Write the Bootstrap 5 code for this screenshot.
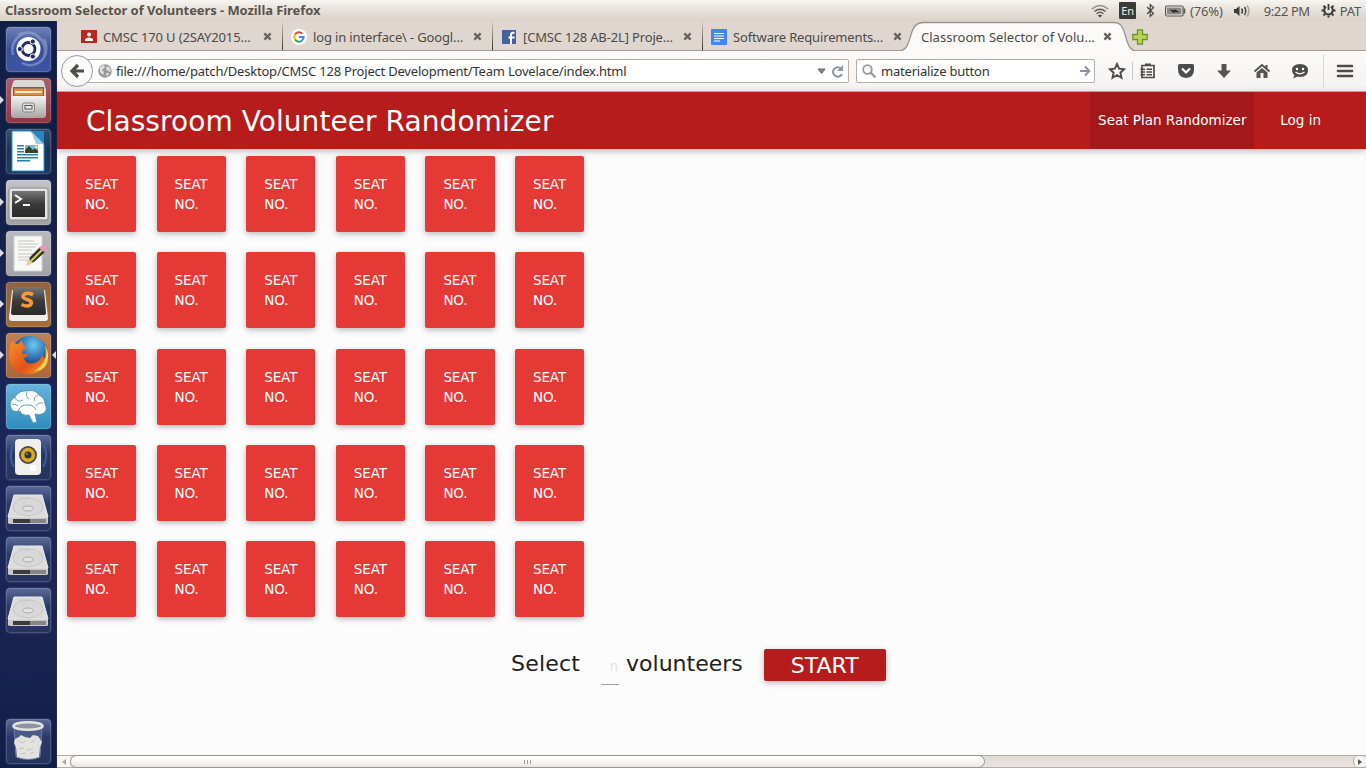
<!DOCTYPE html>
<html lang="en">
<head>
<meta charset="utf-8">
<title>Classroom Selector of Volunteers</title>
<link href="https://cdn.jsdelivr.net/npm/bootstrap@5.3.0/dist/css/bootstrap.min.css" rel="stylesheet">
<script src="https://cdn.jsdelivr.net/npm/bootstrap@5.3.0/dist/js/bootstrap.bundle.min.js"></script>
<style>
body{width:1366px;height:768px;overflow:hidden;font:13px/16px "Noto Sans",sans-serif;color:#3c3b37}
svg{display:block;flex:none}
.panel{height:21px;background:linear-gradient(#f7f5f2,#ece8e2 30%,#dbd2ca 100%);color:#5a534c}
.panel-title{font-weight:700;padding:0 0 2px 5px;letter-spacing:-.08px}
.indicators{width:275px;letter-spacing:-.15px}
.ind-en{width:17px;height:17px;margin:0 10px 0 10px;background:#3c3b37;color:#f0ede8;font-size:11px;border-radius:1px}
.clock{width:47px;margin:0 10px 0 13px;letter-spacing:-.4px}
.launcher{width:57px;flex:none;background:radial-gradient(circle at 30% 60%,#1c2659,transparent 60%),linear-gradient(#101f45,#16224d 45%,#1b2453 75%,#101f47);padding:6px 0 4px 6px;gap:6px;border-right:1px solid #24264c}
.tile{width:45px;height:45px;border-radius:4px;position:relative;box-shadow:0 0 0 1px #ffffff14}
.tile::before{content:"";position:absolute;inset:0;border:1px solid #ffffff28;border-radius:4px}
.tile>svg{width:45px;height:45px}
.glass{background:linear-gradient(#5a6a96,#2b3a6b 40%,#26335f)}
.mark-l,.mark-r{position:absolute;top:18px;border:4px solid transparent}
.mark-l{left:-6px;border-left-color:#dcdce4;border-right:0}
.mark-r{right:-5px;border-right-color:#dcdce4;border-left:0}
.tabstrip{height:30px;flex:none;background:#dfd6cf;border-bottom:1px solid #a39a92;padding-left:16px;letter-spacing:-.15px}
.tab{width:210px;padding:2px 11px 0 8px;position:relative;height:29px;color:#4c4a47}
.tab.sep{border-right:1px solid;border-image:linear-gradient(#dfd6cf,#2d2a26) 1;padding-right:10px}
.tab .fav{width:22px}
.tab-shape{position:absolute;left:-15px;top:0}
.tab.active{letter-spacing:.02px}
.toolbar{height:41px;flex:none;background:linear-gradient(#fbfaf9,#f4f3f1);border-bottom:1px solid #bdb4ac;letter-spacing:-.21px;color:#333}
.field{height:24px;background:#fff;border:1px solid #b9aca2;border-radius:2px}
.urlfield{width:772px;margin-left:-16px;padding:0 4px 0 20px}
.searchfield{width:239px;margin-left:7px;padding:0 3px 0 5px}
.back{width:32px;height:32px;border-radius:50%;background:#fbfaf9;border:1px solid #8f9daa;margin-left:4px;z-index:1;flex:none}
.tools svg{width:18px;height:18px;margin-right:20px}
.page{background:#fcfcfc;font-family:"DejaVu Sans",sans-serif}
.mainbar{height:57px;background:#b71c1c;color:#fff;box-shadow:0 2px 5px #00000029,0 2px 10px #0000001f;font-size:13.5px;line-height:56px;position:relative}
.mainbar .title{font-size:28px;line-height:60px;padding-left:29px;letter-spacing:.07px}
.mainbar .on{background:#a31919;width:164px}
.mainbar .login{padding:0 45px 0 26px}
.seats{display:grid;grid-template-columns:repeat(6,69.3px);gap:20.3px;padding:7px 0 0 10px}
.seat{height:76px;background:#e53935;color:#fff;border-radius:2px;padding:18px 0 0 18px;font-size:13.5px;line-height:20px;letter-spacing:-.1px;box-shadow:0 2px 5px #00000029,0 2px 8px #0000001f}
.pick{font-size:22px;line-height:30px;color:#212121;margin-top:32px;padding-left:454px}
.count{width:18px;border-bottom:1px solid #9e9e9e;color:#e2e2e2;font-size:13.5px;line-height:35px;height:36px;margin:0 7px 0 21px;padding-right:1px}
.start{width:122px;height:32px;line-height:34px;background:#b71c1c;color:#fff;border-radius:2px;box-shadow:0 2px 5px #00000029,0 2px 8px #0000001f;margin-left:21px}
.hscroll{height:13px;flex:none;background:linear-gradient(#dfdad5,#e9e5e0);border-top:1px solid #b4aba0;border-bottom:1px solid #b4aba0}
.thumb{width:915px;height:13px;border:1px solid #9c9488;border-radius:7px;background:linear-gradient(#fff,#f8f7f5 50%,#e9e5e0)}
.arrowcap{width:13px;height:11px;background:#f8f6f4}
.arrowcap.rightcap{border-left:1px solid #b4aba0;border-radius:6px}
</style>
</head>
<body class="d-flex flex-column">
<svg width="0" height="0" class="position-absolute"><defs>
<linearGradient id="silver" x2="0" y2="1"><stop stop-color="#f4f4f2"/><stop offset="1" stop-color="#a5a5a3"/></linearGradient>
<linearGradient id="blackg" x2="0" y2="1"><stop stop-color="#777"/><stop offset=".5" stop-color="#3a3a3a"/><stop offset="1" stop-color="#2a2a2a"/></linearGradient>
<radialGradient id="globe" cx=".6" cy=".25"><stop stop-color="#6fc8f0"/><stop offset="1" stop-color="#17529c"/></radialGradient>
<linearGradient id="fox" x2="1" y2="1"><stop stop-color="#f7912b"/><stop offset=".6" stop-color="#e5511c"/><stop offset="1" stop-color="#f6a623"/></linearGradient>
<symbol id="x" viewBox="0 0 10 10"><path d="M1.500 1.500l7 7m0-7l-7 7" stroke="#67645f" stroke-width="2.600"/></symbol>
<symbol id="disk" viewBox="0 0 45 45"><path d="M8 9h28l6 21v7q0 1-2 1H5q-3 0-3-1v-7z" fill="#c9c9c9"/><path d="M8 9h28l6 22H2z" fill="#dcdcdc" stroke="#e8e8e8"/><ellipse cx="22" cy="21" rx="15" ry="9" fill="#d8d8d8" stroke="#c6c6c6"/><ellipse cx="22" cy="22.500" rx="5" ry="2.500" fill="#e2e2e2" stroke="#aaa"/><path d="M13 12h10l-6 5" fill="none" stroke="#c8c8c8"/><path d="M7 33h33v4H7z" fill="#3c3c3c"/><path d="M24 33h16v4H24z" fill="#858585"/></symbol>
</defs></svg>

<header class="panel d-flex flex-shrink-0 align-items-center justify-content-between">
  <div class="panel-title text-nowrap">Classroom Selector of Volunteers - Mozilla Firefox</div>
  <div class="indicators d-flex align-items-center">
    <svg width="18" height="14" viewBox="0 0 18 14" fill="none" stroke-width="1.400"><path d="M1 5q8-7 16 0" stroke="#8f8a84"/><path d="M3.500 7.500q5.500-4.500 11 0M5.500 9.800q3.500-3 7 0" stroke="#5a5650"/><path d="M7 11.500q2-1.500 4 0l-2 2z" fill="#3c3b37"/></svg>
    <div class="ind-en d-flex align-items-center justify-content-center">En</div>
    <svg width="9" height="15" viewBox="0 0 9 15"><path d="M1 4l6.500 6.500-3.300 3V1.500l3.300 3L1 11" fill="none" stroke="#4a4743" stroke-width="1.200"/></svg>
    <svg style="margin:0 4px 0 10px" width="21" height="12" viewBox="0 0 21 12"><rect x=".6" y="1" width="17.500" height="10" rx="1.500" fill="#f4f2ef" stroke="#55524d" stroke-width="1.200"/><path d="M2 2.500h14.500v7H2z" fill="#8b8883"/><path d="M19.500 3.500v5" stroke="#55524d" stroke-width="1.500"/><path d="M4.500 4.500l5 1V4l5 3.500-5-.7v1.700z" fill="#222"/></svg>
    <span>(76%)</span>
    <svg style="margin-left:10px" width="18" height="14" viewBox="0 0 18 14" fill="none" stroke="#4a4743" stroke-width="1.500"><path d="M1 5h2L6.500 2v10L3 9H1z" fill="#3c3b37" stroke="none"/><path d="M8.500 4.500q2 2.500 0 5M11.500 3q2.500 4 0 8"/><path d="M14 1.500q4 5.500 0 11" stroke="#aaa59e"/></svg>
    <span class="clock text-nowrap">9:22 PM</span>
    <svg style="margin-right:4px" width="15" height="15" viewBox="0 0 15 15" fill="none" stroke="#3c3b37"><path d="M5 3.700a4.300 4.300 0 1 0 5 0" stroke-width="2"/><path d="M7.500 1v6" stroke-width="1.800"/><path d="M2.500 2.800l1.500 1.500M12.500 2.800L11 4.300M.5 7.500H3m9 0h2.500M2.500 12.500L4 11m8.500 1.500L11 11m-3.500 1.500v2" stroke-width="2"/></svg>
    <span>PAT</span>
  </div>
</header>

<div class="d-flex flex-grow-1">
<nav class="launcher d-flex flex-column">
  <div class="tile" style="background:linear-gradient(#6d80b8,#3a4f96 50%,#3c55a5)"><svg viewBox="0 0 45 45" fill="none"><path d="M7 28C2 10 24-2 34 12M38 12c8 16-6 32-22 24M12 8c12-8 32 4 26 22" stroke="#a4b4dc" stroke-width="2.500" opacity=".5"/><circle cx="22.500" cy="22" r="12" fill="#fff"/><circle cx="22.500" cy="22" r="6.500" stroke="#1f2d63" stroke-width="2.800"/><g fill="#1f2d63" stroke="#fff"><circle cx="13.800" cy="22" r="2.600"/><circle cx="26.800" cy="14.500" r="2.600"/><circle cx="26.800" cy="29.500" r="2.600"/></g></svg></div>
  <div class="tile" style="background:linear-gradient(#a8606c,#8f3543)"><i class="mark-l"></i><svg viewBox="0 0 45 45"><path d="M7 4q1-2 3-2h25q2 0 3 2l2 8v20H5V12z" fill="#d8d8d5"/><path d="M7 9h31v9H7z" fill="#6b625c"/><path d="M8 10.500h29v7H8z" fill="#e08b3f"/><path d="M9 13h27v2H9z" fill="#fbe9d0"/><path d="M5 18h35v19q0 3-3 3H8q-3 0-3-3z" fill="url(#silver)"/><rect x="16.500" y="25" width="12" height="9" rx="2" fill="#ddd" stroke="#858585"/><rect x="19" y="27.500" width="7" height="3.500" fill="#eee" stroke="#555"/></svg></div>
  <div class="tile" style="background:linear-gradient(#33506f,#1b3357 50%,#1d3a61)"><svg viewBox="0 0 45 45"><path d="M6 2h19l13 13v27H6z" fill="#fff" stroke="#2b91cc"/><path d="M24 2h14v14z" fill="#2388c0"/><path d="M25 2v0l13 13h-8z" fill="#9bcbe4"/><g fill="#2a80ad"><path d="M11 16h7v1.500h-7zM11 19h7v1.500h-7zM11 22h7v1.500h-7zM11 25h21v1.500H11zM11 28h21v1.500H11zM11 31h13v1.500H11z"/></g><path d="M19 16h13v8H19z" fill="#79b7dd"/><path d="M19 24v-3l4-4 4 4 2-2 3 3v2z" fill="#34452b"/><circle cx="30" cy="18" r="1.500" fill="#ffe04b"/></svg></div>
  <div class="tile" style="background:linear-gradient(#c4c4c8,#a0a0a5)"><i class="mark-l"></i><svg viewBox="0 0 45 45"><rect x="3" y="8" width="39" height="32" rx="2" fill="#e3e3df" stroke="#88888a"/><rect x="6" y="11" width="33" height="26" fill="url(#blackg)"/><path d="M9 15l6 4-6 4" fill="none" stroke="#fff" stroke-width="2"/><path d="M17 25h7" stroke="#fff" stroke-width="2"/></svg></div>
  <div class="tile" style="background:linear-gradient(#b9b9bd,#a2a2a7)"><i class="mark-l"></i><svg viewBox="0 0 45 45"><path d="M8 5h28v35H8z" fill="#f7f7f5" stroke="#d2d2d2"/><path d="M12 10h16M12 13h20M12 16h18M12 19h14M12 23h16M12 26h12M12 29h10" stroke="#c4c4c4"/><path d="M21 34l3-8 10-10 5 5-11 10z" fill="#33332f"/><path d="M25 30l11-11" stroke="#d6d24a" stroke-width="2"/><path d="M20 35l3-7 4 4z" fill="#e8cd9a"/><path d="M33 17l3-3q4-1 5 4l-3 3z" fill="#e59abb"/></svg></div>
  <div class="tile" style="background:linear-gradient(#8d6443,#a56d34)"><i class="mark-l"></i><svg viewBox="0 0 45 45"><path d="M3 36L6 8h33l3 28q0 3-3 3H6q-3 0-3-3z" fill="#f0eeea"/><path d="M5 31L7 8q0-3 3-3h25q3 0 3 3l2 23q0 2-3 2H8q-3 0-3-2z" fill="url(#blackg)"/><path d="M27 12.500q-8-3-10 1.500c-1 4 9 3 8.500 7q-2 5-10 1.500" fill="none" stroke="#f59a37" stroke-width="3.500"/></svg></div>
  <div class="tile" style="background:linear-gradient(#c08058,#a8683c)"><i class="mark-l"></i><i class="mark-r"></i><svg viewBox="0 0 45 45"><circle cx="24" cy="21" r="18" fill="url(#globe)"/><path d="M6 8q2 3 6 3l4-4q0 5 5 8-5 1-5 6 4-1 7 2-4 0-5 3 3 6 10 4 7-2 8-9l2 5q3-7 0-14 5 8 3 16-4 13-18 13Q8 41 4 29 1 17 6 8z" fill="url(#fox)"/><path d="M38 12q3 4 2 12l-3 6q-5 7-10 8 14 0 15-13 1-8-4-13z" fill="#fcd34a"/></svg></div>
  <div class="tile" style="background:linear-gradient(#66b4da,#2e8cbd)"><svg viewBox="0 0 45 45" fill="#fff" stroke="#3b8eb5" stroke-width=".8"><path d="M5 24q-3-7 4-11 4-7 12-6 8-2 12 4 6 3 6 9 3 5-1 9-4 3-9 1l2 8-4 1-4-8q-8 1-9-4-7 2-9-3z"/><path d="M9 14q3 5 8 2m4-8q-2 5 2 7m9-4q-5 2-3 6m8 2q-5-1-7 3m-18 5q3-7 10-6 6 0 8 5m-18-4q-2-2-6-2" fill="none"/></svg></div>
  <div class="tile glass"><svg viewBox="0 0 45 45"><path d="M7 10q-5 12 1 22M38 10q5 12-1 22" fill="none" stroke="#3a5f98" stroke-width="2"/><path d="M13 4h18q4 0 4 4v28q0 4-4 4H13q-4 0-4-4V8q0-4 4-4z" fill="#efefec"/><circle cx="22" cy="20" r="9" fill="#484848"/><circle cx="22" cy="20" r="7.200" fill="#d9ab1e"/><circle cx="22" cy="20" r="3.500" fill="#333"/><circle cx="21" cy="19" r="1.200" fill="#777"/><circle cx="27" cy="33" r="3" fill="#fff"/></svg></div>
  <div class="tile glass"><svg><use href="#disk"/></svg></div>
  <div class="tile glass"><svg><use href="#disk"/></svg></div>
  <div class="tile glass"><svg><use href="#disk"/></svg></div>
  <div class="tile glass mt-auto"><svg viewBox="0 0 45 45"><path d="M8 9h28l-2 29q-12 5-24 0z" fill="#4b5b86" stroke="#6f7ca2"/><ellipse cx="22" cy="7" rx="14.500" ry="3.800" fill="#8d93a0" stroke="#e4e4de" stroke-width="2.600"/><path d="M9 20l4-2 2-2 4 2 5 1 3-3 5 1 2 3 2 3-2 5-1 10q-10 4-22 0l-1-10-2-4z" fill="#e2e2df"/><path d="M13 22l4 2 3-3m4 3l5-3m-16 9l5-1m3 2l6-1m-12 5l5-1m4 1l4-2" stroke="#c2c2c0" fill="none"/></svg></div>
</nav>

<section class="flex-grow-1 d-flex flex-column">
  <div class="tabstrip d-flex">
    <div class="tab sep d-flex align-items-center"><div class="fav"><svg width="16" height="13"><path d="M0 0h16v13H0z" fill="#b5281c"/><circle cx="8" cy="4.500" r="2" fill="#fff"/><path d="M4 11V9q4-3 8 0v2z" fill="#fff"/></svg></div><span>CMSC 170 U (2SAY2015…</span><svg class="ms-auto" width="9" height="9"><use href="#x"/></svg></div>
    <div class="tab sep d-flex align-items-center"><div class="fav"><svg width="16" height="16" viewBox="0 0 16 16"><circle cx="8" cy="8" r="8" fill="#fff"/><g fill="none" stroke-width="2"><path d="M11.300 4.600A4.700 4.700 0 0 0 4 5.500" stroke="#ea4335"/><path d="M4 5.500a4.700 4.700 0 0 0 0 5" stroke="#fbbc05"/><path d="M4 10.500a4.700 4.700 0 0 0 7 1" stroke="#34a853"/><path d="M11 11.500A4.700 4.700 0 0 0 12.700 8H8" stroke="#4285f4"/></g></svg></div><span>log in interface\ - Googl…</span><svg class="ms-auto" width="9" height="9"><use href="#x"/></svg></div>
    <div class="tab sep d-flex align-items-center"><div class="fav"><svg style="margin-left:1px" width="14" height="14"><path d="M0 0h14v14H0z" fill="#4460a0"/><path d="M12.500 2.800h-1.300q-2.200 0-2.200 2.200v9M6.500 7.500h6" stroke="#fff" stroke-width="2" fill="none"/></svg></div><span>[CMSC 128 AB-2L] Proje…</span><svg class="ms-auto" width="9" height="9"><use href="#x"/></svg></div>
    <div class="tab d-flex align-items-center"><div class="fav"><svg width="16" height="16"><rect width="16" height="16" rx="1" fill="#4285f4"/><path d="M3 4.500h10M3 7h10M3 9.500h10M3 12h6" stroke="#fff"/></svg></div><span>Software Requirements…</span><svg class="ms-auto" width="9" height="9"><use href="#x"/></svg></div>
    <div class="tab active d-flex align-items-center"><svg class="tab-shape" width="242" height="30" viewBox="0 0 242 30"><path d="M0 30.500C10 29 10 22 13 14 15 6 18 1.500 26 1.500H216c7 0 9 5 11 12 3 10 4 16 13 17" fill="#fbfaf9" stroke="#9a948d" stroke-width="1.300"/></svg><span class="position-relative">Classroom Selector of Volu…</span><svg class="ms-auto position-relative" width="9" height="9"><use href="#x"/></svg></div>
    <svg style="margin:8px 0 0 9px" width="16" height="16" viewBox="0 0 16 16"><path d="M5.500.8h5v4.700h4.700v5h-4.700v4.700h-5v-4.700H.8v-5h4.700z" fill="#b9d455" stroke="#6f9324" stroke-width="1.300"/></svg>
  </div>
  <div class="toolbar d-flex align-items-center">
    <div class="back d-flex align-items-center justify-content-center"><svg width="16" height="16" viewBox="0 0 16 16"><path d="M9 2L3 8l6 6M3 8h12" fill="none" stroke="#4c4c4c" stroke-width="3.200"/></svg></div>
    <div class="field urlfield d-flex align-items-center">
      <svg width="14" height="14" viewBox="0 0 14 14"><circle cx="7" cy="7" r="6.800" fill="#9a9a9a"/><path d="M2 3l4-2 1 2-3 3 2 2-1 3-3-3zM9 2l3 2 1 4-3-1-2-2zM8 9l3 0-2 4z" fill="#dedede"/></svg>
      <span style="margin-left:4px">file:///home/patch/Desktop/CMSC 128 Project Development/Team Lovelace/index.html</span>
      <svg class="ms-auto" width="9" height="6"><path d="M1 1h7L4.500 5.500z" fill="#888" stroke="#666"/></svg>
      <svg style="margin-left:5px" width="13" height="13" viewBox="0 0 13 13"><path d="M10 3.500A4.700 4.700 0 1 0 11 9" fill="none" stroke="#8a99a6" stroke-width="2"/><path d="M12 0v6H6z" fill="#8a99a6"/></svg>
    </div>
    <div class="field searchfield d-flex align-items-center">
      <svg width="14" height="14" viewBox="0 0 14 14" fill="none" stroke="#999"><circle cx="5.500" cy="5.500" r="4.300" stroke-width="1.800"/><path d="M8.500 8.500l5 5" stroke-width="2.400"/></svg>
      <span style="margin-left:5px">materialize button</span>
      <svg class="ms-auto" width="12" height="12" viewBox="0 0 12 12"><path d="M1 6h9M6 1.500L10.500 6 6 10.500" fill="none" stroke="#8795a3" stroke-width="1.800"/></svg>
    </div>
    <div class="tools d-flex align-items-center" style="margin-left:13px">
      <svg style="margin-right:6px" viewBox="0 0 18 18"><path d="M9 2l2.100 4.700 5.100.5-3.800 3.500 1.100 5L9 13l-4.500 2.700 1.100-5L1.800 7.200l5.100-.5z" fill="none" stroke="#4c4c4c" stroke-width="1.900"/></svg>
      <div style="width:1px;height:18px;background:#c5cad0;margin-right:6px"></div>
      <svg viewBox="0 0 18 18"><path d="M3 3.500h12v12H3z" fill="none" stroke="#4c4c4c" stroke-width="1.700"/><path d="M6 1.500h6v2H6zM7.500 6.500H13V8H7.500zM7.500 9.200H13v1.500H7.500zM7.500 12H13v1.500H7.500zM1.500 6.500H6V8H1.500zM1.500 9.200H6v1.500H1.500zM1.500 12H6v1.500H1.500z" fill="#4c4c4c"/></svg>
      <svg viewBox="0 0 18 18"><path d="M1 3.500Q1 2 2.500 2h13Q17 2 17 3.500V8q0 7-8 8-8-1-8-8z" fill="#4c4c4c"/><path d="M5 6.500l4 4 4-4" fill="none" stroke="#fff" stroke-width="2.200"/></svg>
      <svg viewBox="0 0 18 18"><path d="M6.500 2h5v6.500H16l-7 7.500-7-7.500h4.500z" fill="#555"/></svg>
      <svg viewBox="0 0 18 18"><path d="M1.500 9.500L9 3l7.500 6.500M13.500 3v4" fill="none" stroke="#555" stroke-width="2"/><path d="M3.500 10.500L9 6l5.500 4.500V16h-4v-5h-3v5h-4z" fill="#555"/></svg>
      <svg style="margin-right:14px" viewBox="0 0 18 18"><path d="M9 2q8 0 8 6.500T9 15q-1.500 0-2.500-.4L2 16.500l1.500-3.300Q1 11.500 1 8.500 1 2 9 2z" fill="#4c4c4c"/><circle cx="6" cy="7" r="1.200" fill="#fff"/><circle cx="12" cy="7" r="1.200" fill="#fff"/><path d="M4.500 10q4.500 3.500 9 0" fill="none" stroke="#fff" stroke-width="1.300"/></svg>
      <div style="width:1px;height:34px;background:#dcd8d4;margin-right:12px"></div>
      <svg class="me-0" viewBox="0 0 18 18"><path d="M2 4h14M2 9h14M2 14h14" stroke="#4c4c4c" stroke-width="2.600" stroke-linecap="round"/></svg>
    </div>
  </div>

  <main class="page flex-grow-1">
    <div class="mainbar d-flex">
      <span class="title">Classroom Volunteer Randomizer</span>
      <span class="on ms-auto text-center">Seat Plan Randomizer</span>
      <span class="login">Log in</span>
    </div>
    <div class="seats" id="seats"></div>
    <div class="pick d-flex">
      <span style="letter-spacing:.2px">Select</span>
      <div class="count text-end">n</div>
      <span>volunteers</span>
      <div class="start text-center">START</div>
    </div>
  </main>
  <div class="hscroll d-flex align-items-center">
    <div class="arrowcap d-flex align-items-center justify-content-center"><svg width="4" height="6"><path d="M4 0v6L0 3z" fill="#aaa59e"/></svg></div>
    <div class="thumb d-flex align-items-center justify-content-center"><svg width="8" height="4"><path d="M.5 0v4m3-4v4m3-4v4" stroke="#a39c93"/></svg></div>
    <div class="arrowcap rightcap ms-auto d-flex align-items-center justify-content-center"><svg width="4" height="6"><path d="M0 0v6l4-3z" fill="#555"/></svg></div>
  </div>
</section>
</div>
<script>
document.getElementById('seats').innerHTML = '<div class="seat">SEAT<br>NO.</div>'.repeat(30);
</script>
</body>
</html>
